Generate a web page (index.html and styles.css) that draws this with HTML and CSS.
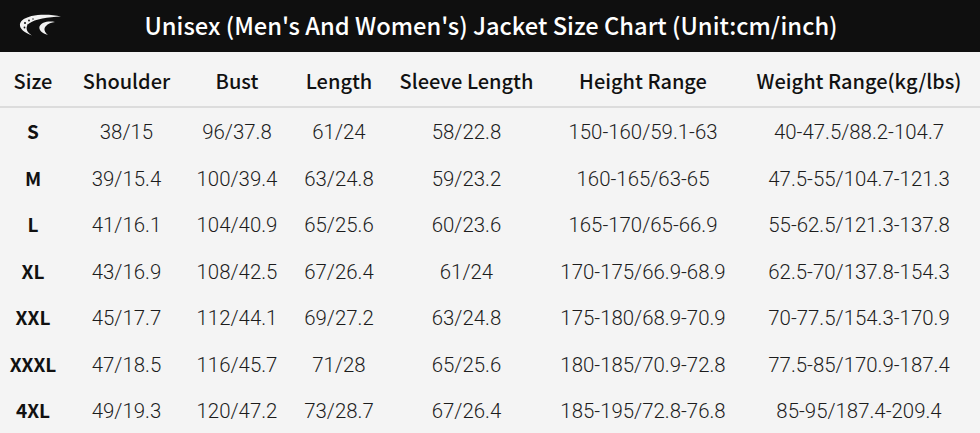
FILE: index.html
```html
<!DOCTYPE html>
<html>
<head>
<meta charset="utf-8">
<link rel="stylesheet" href="styles.css">
</head>
<body>
<div class="chart">
  <header class="topbar">
    <svg class="logo" viewBox="0 0 44 22" width="44" height="22">
      <path d="M44 2.5 C31 -0.5 12 0 5 6.5 C0.5 11 3 17 15 21.5 C9 18 8 13 12 9.5 C18 5 31 3 44 2.5 Z" fill="#f2f2f2"/>
      <path d="M38 8 C31 6.5 24 8.5 22.5 12.5 C21.5 16 25 19.5 31 21 C27.5 18 26.5 15 28.5 12.5 C31 9.5 34.5 8.5 38 8 Z" fill="#f2f2f2"/>
      <circle cx="8" cy="9" r="1" fill="#0f0f0f"/>
      <circle cx="12" cy="6.5" r="0.9" fill="#0f0f0f"/>
      <circle cx="7.5" cy="13.5" r="0.9" fill="#0f0f0f"/>
      <circle cx="11" cy="11" r="0.8" fill="#0f0f0f"/>
      <circle cx="16" cy="5" r="0.7" fill="#0f0f0f"/>
    </svg>
    <h1 class="title">Unisex (Men's And Women's) Jacket Size Chart (Unit:cm/inch)</h1>
  </header>
  <div class="grid head">
    <div>Size</div><div>Shoulder</div><div>Bust</div><div>Length</div><div>Sleeve Length</div><div>Height Range</div><div>Weight Range(kg/lbs)</div>
  </div>
  <div class="rows">
    <div class="grid row"><div class="sz">S</div><div>38/15</div><div>96/37.8</div><div>61/24</div><div>58/22.8</div><div>150-160/59.1-63</div><div>40-47.5/88.2-104.7</div></div>
    <div class="grid row"><div class="sz">M</div><div>39/15.4</div><div>100/39.4</div><div>63/24.8</div><div>59/23.2</div><div>160-165/63-65</div><div>47.5-55/104.7-121.3</div></div>
    <div class="grid row"><div class="sz">L</div><div>41/16.1</div><div>104/40.9</div><div>65/25.6</div><div>60/23.6</div><div>165-170/65-66.9</div><div>55-62.5/121.3-137.8</div></div>
    <div class="grid row"><div class="sz">XL</div><div>43/16.9</div><div>108/42.5</div><div>67/26.4</div><div>61/24</div><div>170-175/66.9-68.9</div><div>62.5-70/137.8-154.3</div></div>
    <div class="grid row"><div class="sz">XXL</div><div>45/17.7</div><div>112/44.1</div><div>69/27.2</div><div>63/24.8</div><div>175-180/68.9-70.9</div><div>70-77.5/154.3-170.9</div></div>
    <div class="grid row"><div class="sz">XXXL</div><div>47/18.5</div><div>116/45.7</div><div>71/28</div><div>65/25.6</div><div>180-185/70.9-72.8</div><div>77.5-85/170.9-187.4</div></div>
    <div class="grid row"><div class="sz">4XL</div><div>49/19.3</div><div>120/47.2</div><div>73/28.7</div><div>67/26.4</div><div>185-195/72.8-76.8</div><div>85-95/187.4-209.4</div></div>
  </div>
</div>
</body>
</html>
```
FILE: styles.css
```css
* { box-sizing: border-box; margin: 0; padding: 0; }
html, body { width: 980px; height: 433px; overflow: hidden; background: #f4f4f4; }
body { font-family: Roboto, "Noto Sans", sans-serif; color: #1a1a1a; }
.chart { width: 980px; height: 433px; background: #f4f4f4; }
.topbar {
  height: 52px; background: #0f0f0f; display: flex; align-items: center;
  justify-content: center; position: relative;
}
.logo { position: absolute; left: 17px; top: 14px; }
.title {
  color: #fff; font-family: "Noto Sans CJK SC", "Noto Sans", sans-serif;
  font-size: 23.7px; font-weight: 500; line-height: 1; margin-left: 2px; margin-top: -1px;
}
.grid {
  display: grid;
  grid-template-columns: 66px 121px 100px 104px 151px 202px 230px;
  align-items: center; text-align: center;
}
.head {
  height: 56px; border-bottom: 2px solid #dcdcdc; padding-top: 3px;
  font-family: "Noto Sans CJK SC", "Noto Sans", sans-serif;
  font-size: 20px; font-weight: 500; color: #111;
}
.row { height: 46.5px; padding-top: 2px; font-size: 20.4px; font-weight: 300; color: #1c1c1c; }
.row .sz {
  font-family: "Noto Sans CJK SC", "Noto Sans", sans-serif;
  font-weight: 700; font-size: 19px; color: #111; margin-bottom: 3px;
}
```
